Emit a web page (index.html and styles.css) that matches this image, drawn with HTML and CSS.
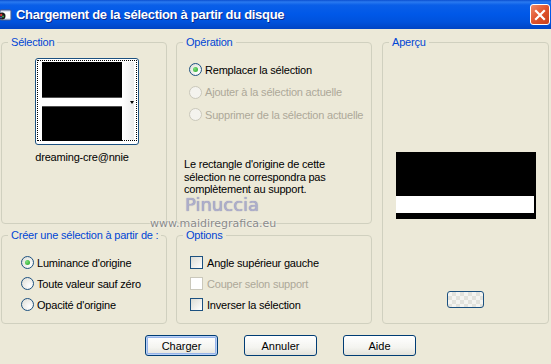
FILE: index.html
```html
<!DOCTYPE html>
<html lang="fr">

<head>
    <meta charset="UTF-8">
    <title>Chargement de la sélection à partir du disque</title>
    <link rel="stylesheet" href="styles.css">
</head>

<body>
    <div class="fenetre">
        <div class="titre">
            <svg class="icone-app" width="14" height="14" viewBox="0 0 14 14">
                <rect x="2" y="2" width="11" height="10" rx="1" fill="#dfe9f7" stroke="#4a5a8a" stroke-width="1"/>
                <rect x="5" y="4" width="7" height="6" fill="#ffffff"/>
                <circle cx="4" cy="8" r="3.5" fill="#1a1a1a"/>
                <circle cx="3.2" cy="7" r="1.2" fill="#d23a3a"/>
                <circle cx="5" cy="8.6" r="1" fill="#3ab04a"/>
                <circle cx="3" cy="9.4" r="0.9" fill="#3a6ad2"/>
            </svg>
            <span class="titre-texte">Chargement de la sélection à partir du disque</span>
            <span class="fermer">
                <svg width="12" height="12" viewBox="0 0 12 12">
                    <path d="M2 2 L10 10 M10 2 L2 10" stroke="#fff" stroke-width="2.2" stroke-linecap="square"/>
                </svg>
            </span>
        </div>

        <div class="panneaux">
            <fieldset class="groupe zone-sel">
                <legend>Sélection</legend>
                <div class="sel-corps">
                    <div class="vignette">
                        <div class="vignette-cadre">
                            <div class="vignette-image"></div>
                            <div class="vignette-bande"><span class="fleche"></span></div>
                        </div>
                    </div>
                    <div class="vignette-nom">dreaming-cre@nnie</div>
                </div>
            </fieldset>

            <fieldset class="groupe zone-op">
                <legend>Opération</legend>
                <div class="op-corps">
                    <div class="choix liste-op">
                        <div class="ligne"><span class="radio coche"></span>Remplacer la sélection</div>
                        <div class="ligne inactif"><span class="radio"></span>Ajouter à la sélection actuelle</div>
                        <div class="ligne inactif"><span class="radio"></span>Supprimer de la sélection actuelle</div>
                    </div>
                    <p class="avis">Le rectangle d'origine de cette<br>sélection ne correspondra pas<br>complètement au support.</p>
                </div>
            </fieldset>

            <fieldset class="groupe zone-apercu">
                <legend>Aperçu</legend>
                <div class="apercu-corps">
                    <div class="apercu">
                        <div class="apercu-bande"></div>
                    </div>
                    <div class="petit-bouton"></div>
                </div>
            </fieldset>

            <fieldset class="groupe zone-src">
                <legend>Créer une sélection à partir de :</legend>
                <div class="choix src-corps">
                    <div class="ligne"><span class="radio coche"></span>Luminance d'origine</div>
                    <div class="ligne"><span class="radio"></span>Toute valeur sauf zéro</div>
                    <div class="ligne"><span class="radio"></span>Opacité d'origine</div>
                </div>
            </fieldset>

            <fieldset class="groupe zone-opt">
                <legend>Options</legend>
                <div class="choix opt-corps">
                    <div class="ligne"><span class="case"></span>Angle supérieur gauche</div>
                    <div class="ligne inactif"><span class="case"></span>Couper selon support</div>
                    <div class="ligne"><span class="case"></span>Inverser la sélection</div>
                </div>
            </fieldset>
        </div>

        <div class="boutons">
            <button class="bouton defaut">Charger</button>
            <button class="bouton">Annuler</button>
            <button class="bouton">Aide</button>
        </div>

        <!-- filigrane de la capture -->
        <div class="filigrane-nom">Pinuccia</div>
        <div class="filigrane-site">www.maidiregrafica.eu</div>
    </div>
</body>

</html>
```

FILE: styles.css
```css
body {
    margin: 0;
    background-color: #ece9d8;
    font-family: "Liberation Sans", Arial, sans-serif;
    font-size: 11px;
    letter-spacing: -0.2px;
    color: #000;
}

.fenetre {
    position: relative;
    width: 551px;
    height: 364px;
    overflow: hidden;
}

/* barre de titre */
.titre {
    height: 29px;
    display: flex;
    align-items: center;
    color: #fff;
    background: linear-gradient(#0b4fcf 0, #2a7af0 2px, #0a5fe8 5px, #0058e8 14px, #0052dc 22px, #0044c4 29px);
}

.icone-app {
    flex: none;
    margin-left: -2px;
}

.titre-texte {
    margin-left: 4px;
    font-weight: bold;
    font-size: 13px;
    letter-spacing: -0.3px;
    text-shadow: 1px 1px 0 #0a2a8a;
}

.fermer {
    margin-left: auto;
    margin-right: 1px;
    width: 18px;
    height: 19px;
    border: 1px solid #fff;
    border-radius: 3px;
    background: linear-gradient(135deg, #f08a6a, #e0532c 50%, #c8401c);
    display: flex;
    align-items: center;
    justify-content: center;
}

/* groupes */
.panneaux {
    display: grid;
    grid-template-columns: 166px 9px 196px 10px 167px;
    grid-template-rows: 188px 95px;
    row-gap: 5px;
    grid-template-areas:
        "sel . op . apercu"
        "src . opt . apercu";
    padding: 7px 0 0 1px;
}

.zone-sel { grid-area: sel; }
.zone-op { grid-area: op; }
.zone-apercu { grid-area: apercu; }
.zone-src { grid-area: src; }
.zone-opt { grid-area: opt; }

.groupe {
    margin: 0;
    padding: 0;
    min-width: 0;
    border: 1px solid #d0d0bf;
    border-radius: 4px;
}

.groupe legend {
    margin-left: 6px;
    padding: 0 3px;
    line-height: 13px;
    white-space: nowrap;
    color: #0046d5;
}

/* Sélection */
.sel-corps {
    display: flex;
    flex-direction: column;
    align-items: center;
    padding-top: 9px;
}

.vignette {
    margin-left: 6px;
    width: 100px;
    height: 83px;
    padding: 1px;
    border: 1px solid #1c5180;
    border-radius: 3px;
    background: #fff;
}

.vignette-cadre {
    height: 81px;
    border: 1px dotted #000;
    display: flex;
    padding: 1px 2px 0 4px;
    box-sizing: border-box;
}

.vignette-image {
    width: 80px;
    height: 79px;
    background: linear-gradient(#000 0 35px, #505050 35px 36px, #fff 36px 44px, #505050 44px 45px, #000 45px);
}

.vignette-bande {
    flex: 1;
    background: linear-gradient(90deg, #fff, #ececec);
    display: flex;
    align-items: center;
    justify-content: flex-end;
}

.fleche {
    margin-top: 2px;
    border-left: 2px solid transparent;
    border-right: 2px solid transparent;
    border-top: 3px solid #000;
}

.vignette-nom {
    margin-top: 6px;
    margin-right: 4px;
    line-height: 13px;
}

/* choix radio / cases */
.choix {
    display: flex;
    flex-direction: column;
}

.ligne {
    display: flex;
    align-items: center;
    gap: 3px;
    height: 13px;
    white-space: nowrap;
}

.inactif {
    color: #aca899;
}

.radio {
    flex: none;
    width: 11px;
    height: 11px;
    border: 1px solid #1c5180;
    border-radius: 50%;
    background: radial-gradient(circle at 70% 70%, #fff, #dcdcd4);
    display: flex;
    align-items: center;
    justify-content: center;
}

.radio.coche::after {
    content: "";
    width: 5px;
    height: 5px;
    border-radius: 50%;
    background: radial-gradient(circle at 35% 35%, #7ee07e, #21a121);
}

.inactif .radio {
    border-color: #cac8bb;
    background: #f4f3ee;
}

.case {
    flex: none;
    width: 11px;
    height: 11px;
    border: 1px solid #1c5180;
    background: linear-gradient(135deg, #dcdcd4, #fff);
    margin-right: 1px;
}

.inactif .case {
    border-color: #cac8bb;
    background: #fff;
}

/* Opération */
.op-corps {
    padding: 14px 0 0 7px;
}

.liste-op {
    padding-left: 5px;
    gap: 9.5px;
}

.avis {
    margin: 37px 0 0;
    line-height: 12.5px;
}

/* Aperçu */
.apercu-corps {
    display: flex;
    flex-direction: column;
    align-items: center;
    padding-top: 103px;
}

.apercu {
    width: 140px;
    height: 67px;
    background: #000;
}

.apercu-bande {
    margin-top: 44px;
    width: 138px;
    height: 17px;
    background: #fff;
}

.petit-bouton {
    margin-top: 72px;
    width: 35px;
    height: 15px;
    border: 1px solid #1c5180;
    border-radius: 3px;
    background-color: #f4f4f0;
    background-image:
        linear-gradient(45deg, #e2e2dc 25%, transparent 25%, transparent 75%, #e2e2dc 75%),
        linear-gradient(45deg, #e2e2dc 25%, transparent 25%, transparent 75%, #e2e2dc 75%);
    background-size: 8px 8px;
    background-position: 0 0, 4px 4px;
}

/* Créer / Options */
.src-corps {
    padding: 14px 0 0 19px;
    gap: 8px;
}

.opt-corps {
    padding: 14px 0 0 13px;
    gap: 8px;
}

/* boutons du bas */
.boutons {
    display: flex;
    gap: 26px;
    padding: 11px 0 0 145px;
}

.bouton {
    width: 73px;
    height: 21px;
    padding: 0;
    border: 1px solid #003c74;
    border-radius: 3px;
    background: linear-gradient(#fff, #f4f4f0 60%, #e3e2da);
    font-family: "Liberation Sans", Arial, sans-serif;
    font-size: 11px;
    color: #000;
}

.defaut {
    box-shadow: inset 0 0 0 1px #b9d1f7, inset 0 0 0 2px #98b4e8;
}

/* filigrane */
.filigrane-nom {
    position: absolute;
    left: 185px;
    top: 197px;
    font-family: "DejaVu Sans", sans-serif;
    font-size: 18px;
    line-height: 16px;
    letter-spacing: 0;
    color: #aeaecb;
    text-shadow: 0 0 1px #7d7fa8;
}

.filigrane-site {
    position: absolute;
    left: 150px;
    top: 218px;
    font-family: "DejaVu Sans", sans-serif;
    font-size: 11px;
    line-height: 11px;
    letter-spacing: 0;
    color: #8a8a8a;
    text-shadow: 0 0 2px #fff;
}
```
